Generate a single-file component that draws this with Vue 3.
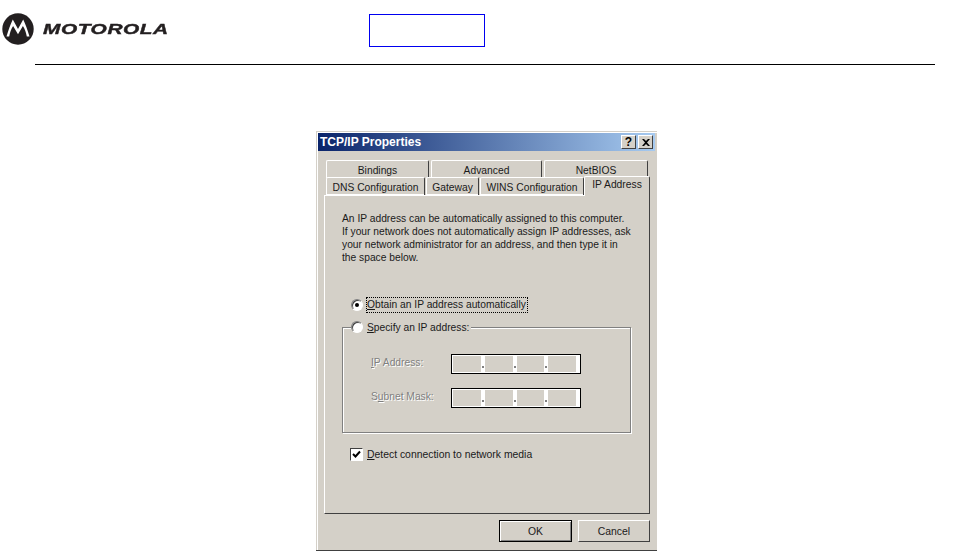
<template>
  <div class="page">
    <header class="top">
      <svg class="logo" viewBox="0 0 32 32" width="32" height="32">
        <circle cx="16" cy="16" r="15.7" fill="#231f20" />
        <path fill="#fff" d="M4.500 23.500C6.500 17 8.500 11 10.800 6.500L16 16 21.200 6.500C23.500 11 25.500 17 27.500 23.500L24.800 23.500C24 19 22.800 16 20.900 13L16 21.200 11.100 13C9.200 16 8 19 7.200 23.500Z" />
      </svg>
      <span class="wordmark">MOTOROLA</span>
      <div class="blue-box"></div>
    </header>
    <div class="rule"></div>

    <section class="dialog">
      <div class="titlebar">
        <span class="title">TCP/IP Properties</span>
        <span class="tb-btn q">?</span>
        <span class="tb-btn x">
          <svg width="8" height="7" viewBox="0 0 8 7"><path d="M0 0h2l2 2 2-2h2L5 3.500 8 7H6L4 5 2 7H0l3-3.500Z" fill="#000" /></svg>
        </span>
      </div>

      <div class="tab-row back">
        <div v-for="t in backTabs" :key="t.label" class="tab" :style="{ width: t.w + 'px' }">{{ t.label }}</div>
      </div>
      <div class="tab-row front">
        <div v-for="t in frontTabs" :key="t.label" class="tab" :class="{ active: t.active }" :style="{ width: t.w + 'px' }">{{ t.label }}</div>
      </div>

      <div class="panel">
        <p class="intro">
          An IP address can be automatically assigned to this computer.<br />
          If your network does not automatically assign IP addresses, ask<br />
          your network administrator for an address, and then type it in<br />
          the space below.
        </p>

        <div class="option first">
          <span class="radio on"></span>
          <span class="focus"><u>O</u>btain an IP address automatically</span>
        </div>

        <fieldset class="group">
          <legend class="option">
            <span class="radio"></span>
            <span class="legend-text"><u>S</u>pecify an IP address:</span>
          </legend>
          <div v-for="f in fields" :key="f.label" class="field-row">
            <label class="off"><span v-html="f.html"></span></label>
            <div class="ip">
              <template v-for="n in 4" :key="n">
                <span class="seg"></span>
                <span class="dot"><i v-if="n < 4"></i></span>
              </template>
            </div>
          </div>
        </fieldset>

        <div class="option check-row">
          <span class="check">
            <svg width="9" height="9" viewBox="0 0 9 9"><path d="M1 4l2.500 2.500L8 1.500" fill="none" stroke="#000" stroke-width="2" /></svg>
          </span>
          <span class="check-label"><u>D</u>etect connection to network media</span>
        </div>
      </div>

      <div class="actions">
        <button class="btn default">OK</button>
        <button class="btn">Cancel</button>
      </div>
    </section>
  </div>
</template>

<script setup>
const backTabs = [
  { label: 'Bindings', w: 103 },
  { label: 'Advanced', w: 111 },
  { label: 'NetBIOS', w: 104 },
]
const frontTabs = [
  { label: 'DNS Configuration', w: 99 },
  { label: 'Gateway', w: 53 },
  { label: 'WINS Configuration', w: 104 },
  { label: 'IP Address', w: 66, active: true },
]
const fields = [
  { label: 'IP Address', html: '<u>I</u>P Address:' },
  { label: 'Subnet Mask', html: 'S<u>u</u>bnet Mask:' },
]
</script>

<style>
html, body { margin: 0; background: #fff; }
</style>

<style scoped>
.page {
  width: 964px;
  height: 551px;
  overflow: hidden;
  background: #fff;
  font-family: "Liberation Sans", Arial, sans-serif;
  font-size: 10.25px;
  color: #1a1a1a;
}
.top {
  display: flex;
  align-items: flex-start;
  height: 64px;
  box-sizing: border-box;
  padding: 13px 0 0 2px;
}
.logo { display: block; }
.wordmark {
  margin: 7px 0 0 9px;
  width: 124px;
  font: italic bold 15px/17px "Liberation Sans", Arial, sans-serif;
  color: #231f20;
  -webkit-text-stroke: 0.4px #231f20;
  letter-spacing: 0.4px;
  transform: scaleX(1.39);
  transform-origin: left center;
  white-space: nowrap;
}
.blue-box {
  width: 116px;
  height: 33px;
  box-sizing: border-box;
  margin: 1px 0 0 202px;
  border: 1px solid #0000f0;
}
.rule {
  height: 1px;
  margin: 0 29px 0 35px;
  background: #000;
}

.dialog {
  width: 341px;
  height: 420px;
  box-sizing: border-box;
  margin: 66px 0 0 316px;
  padding-top: 2px;
  background: #d4d0c8;
  border-bottom: 1px solid #404040;
  box-shadow: inset 1px 1px 0 #d4d0c8, inset 2px 2px 0 #fff;
  display: flex;
  flex-direction: column;
}
.titlebar {
  height: 18px;
  margin: 0 2px;
  display: flex;
  align-items: center;
  padding: 0 2px 0 2px;
  background: linear-gradient(90deg, #0a246a, #a6caf0);
  color: #fff;
}
.title {
  flex: 1;
  font-weight: bold;
  font-size: 12px;
}
.tb-btn {
  width: 15px;
  height: 14px;
  box-sizing: border-box;
  margin-left: 2px;
  background: #d4d0c8;
  border: 1px solid;
  border-color: #fff #404040 #404040 #fff;
  display: flex;
  align-items: center;
  justify-content: center;
  color: #000;
  font-weight: bold;
  font-size: 12px;
  line-height: 1;
}

.tab-row {
  display: flex;
  margin-left: 10px;
  font-size: 10.3px;
}
.tab-row.back {
  margin-top: 9px;
  gap: 2px;
  height: 18px;
}
.tab-row.front {
  gap: 1px;
  height: 17px;
  align-items: flex-end;
  position: relative;
  z-index: 1;
}
.tab {
  height: 18px;
  box-sizing: border-box;
  border: 1px solid;
  border-color: #fff #404040 transparent #fff;
  border-bottom: 0;
  border-radius: 2px 2px 0 0;
  background: #d4d0c8;
  text-align: center;
  line-height: 20px;
  white-space: nowrap;
}
.front .tab {
  box-shadow: inset 0 -1px 0 #fff;
}
.front .tab.active {
  height: 20px;
  margin-left: -1px;
  margin-bottom: -1px;
  line-height: 16px;
  box-shadow: none;
  position: relative;
}

.panel {
  width: 326px;
  height: 319px;
  box-sizing: border-box;
  margin-left: 8px;
  padding: 16px 0 0 17px;
  border: 1px solid;
  border-color: #fff #404040 #404040 #fff;
}
.intro {
  margin: 0;
  line-height: 13px;
  white-space: nowrap;
}
.option {
  display: flex;
  align-items: center;
  gap: 4px;
  height: 14px;
  white-space: nowrap;
}
.option.first {
  margin: 34px 0 0 9px;
}
.focus {
  outline: 1px dotted #000;
  outline-offset: 0;
  padding-right: 1px;
  line-height: 14px;
}
.radio {
  width: 12px;
  height: 12px;
  box-sizing: border-box;
  flex: none;
  border: 1px solid;
  border-color: #808080 #fff #fff #808080;
  border-radius: 50%;
  background: #fff;
  box-shadow: inset 1px 1px 0 #404040;
  display: flex;
  align-items: center;
  justify-content: center;
}
.radio.on::after {
  content: "";
  width: 4px;
  height: 4px;
  border-radius: 50%;
  background: #000;
}
.group {
  width: 289px;
  height: 113px;
  box-sizing: border-box;
  margin: 8px 0 0 0;
  min-width: 0;
  padding: 20px 0 0 28px;
  border: 1px solid #808080;
  box-shadow: 1px 1px 0 #fff, inset 1px 1px 0 #fff;
}
.group legend {
  margin-left: -20px;
  padding: 0 1px 0 0;
  background: #d4d0c8;
}
.legend-text { padding-right: 1px; }
.field-row {
  display: flex;
  align-items: center;
  height: 20px;
  margin-bottom: 14px;
}
.off {
  width: 80px;
  padding-bottom: 3px;
  color: #808080;
  text-shadow: 1px 1px 0 #fff;
}
.ip {
  width: 130px;
  height: 20px;
  box-sizing: border-box;
  display: flex;
  padding: 1px 0 1px 1px;
  border: 1px solid #000;
  background: #fff;
}
.seg {
  width: 28px;
  background: #d4d0c8;
}
.dot {
  width: 4px;
  display: flex;
  justify-content: center;
  align-items: flex-end;
  padding-bottom: 4px;
}
.dot i {
  display: block;
  width: 2px;
  height: 2px;
  background: #808080;
}
.check-row {
  margin: 14px 0 0 8px;
  gap: 4px;
}
.check-label { font-size: 10.4px; }
.check {
  width: 13px;
  height: 13px;
  box-sizing: border-box;
  flex: none;
  border: 1px solid;
  border-color: #404040 #fff #fff #404040;
  background: #fff;
  display: flex;
  align-items: center;
  justify-content: center;
}
.actions {
  display: flex;
  justify-content: flex-end;
  gap: 6px;
  margin: 6px 7px 0 0;
}
.btn {
  width: 72px;
  height: 22px;
  box-sizing: border-box;
  padding: 0;
  background: #d4d0c8;
  border: 1px solid;
  border-color: #fff #404040 #404040 #fff;
  font: 10.4px "Liberation Sans", Arial, sans-serif;
  color: #1a1a1a;
}
.btn.default {
  width: 73px;
  border: 1px solid #000;
  box-shadow: inset 1px 1px 0 #fff, inset -1px -1px 0 #808080;
}
</style>
